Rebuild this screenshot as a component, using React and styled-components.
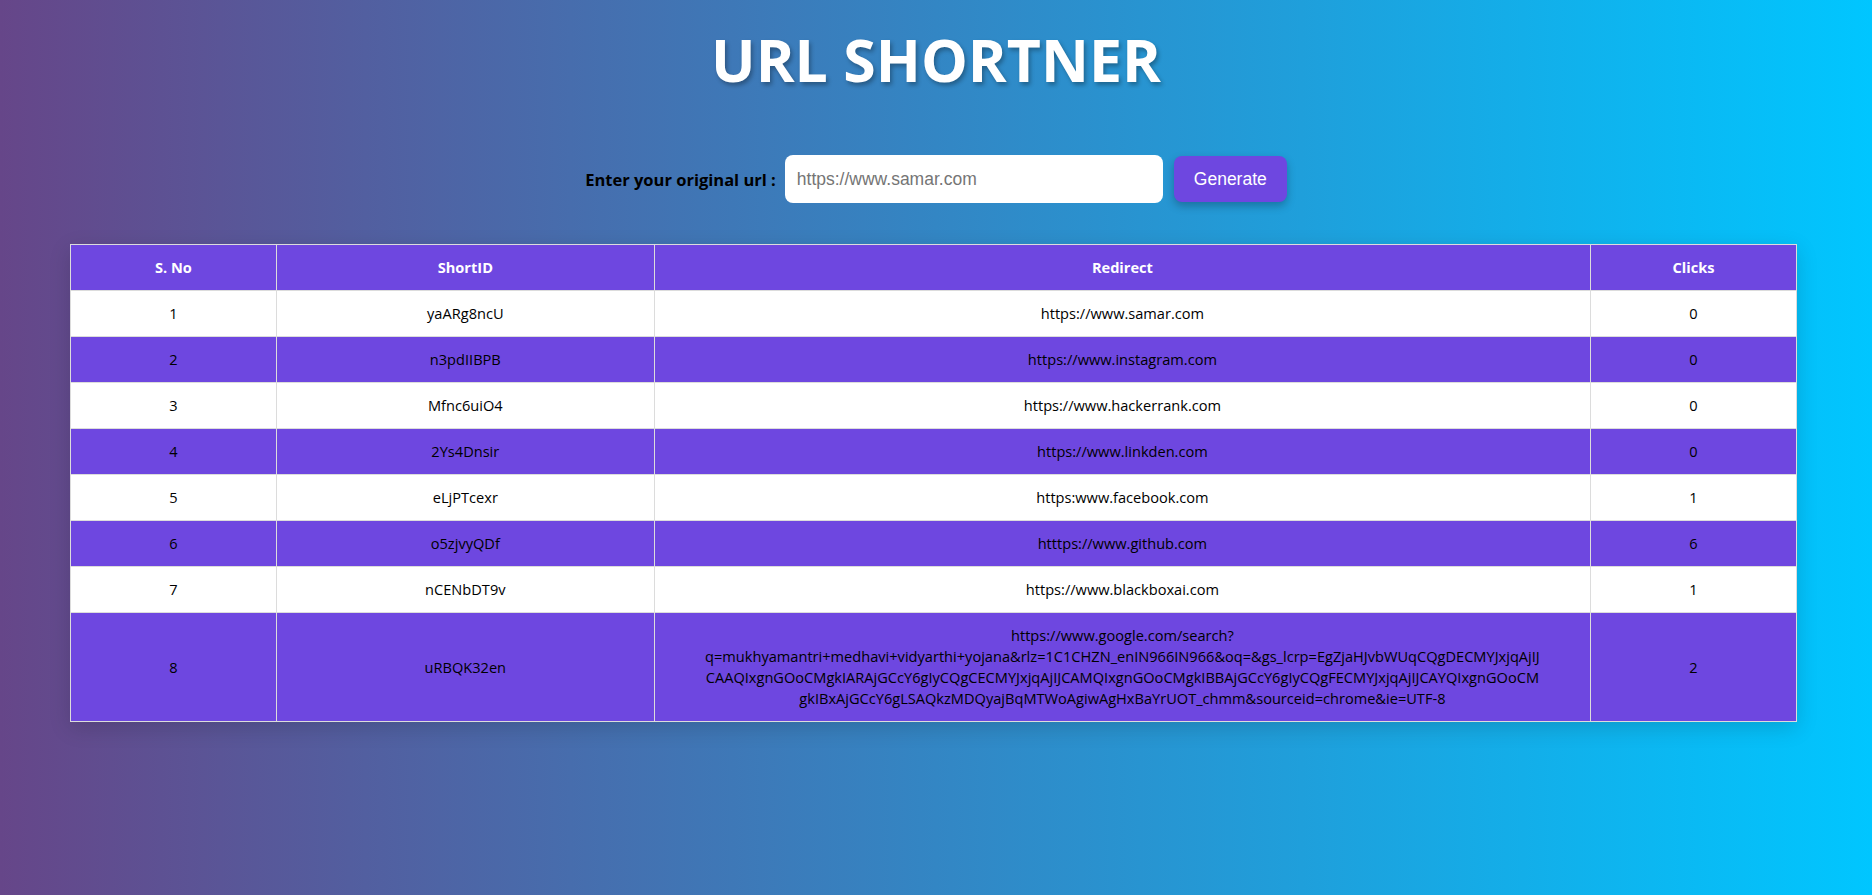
import styled, { createGlobalStyle } from "styled-components";

const GlobalStyle = createGlobalStyle`
  body{
    margin: 0;
    font-family: "Open Sans", "Noto Sans", sans-serif;
  }
`;

const columns = [
  { label: "S. No", width: "11.93%" },
  { label: "ShortID", width: "21.89%" },
  { label: "Redirect", width: "54.25%" },
  { label: "Clicks", width: "11.93%" },
];

const rows = [
  { id: "yaARg8ncU", redirect: ["https://www.samar.com"], clicks: 0 },
  { id: "n3pdIIBPB", redirect: ["https://www.instagram.com"], clicks: 0 },
  { id: "Mfnc6uiO4", redirect: ["https://www.hackerrank.com"], clicks: 0 },
  { id: "2Ys4Dnsir", redirect: ["https://www.linkden.com"], clicks: 0 },
  { id: "eLjPTcexr", redirect: ["https:www.facebook.com"], clicks: 1 },
  { id: "o5zjvyQDf", redirect: ["htttps://www.github.com"], clicks: 6 },
  { id: "nCENbDT9v", redirect: ["https://www.blackboxai.com"], clicks: 1 },
  {
    id: "uRBQK32en",
    // long search url, kept on the same lines as the live page wraps it
    redirect: [
      "https://www.google.com/search?",
      "q=mukhyamantri+medhavi+vidyarthi+yojana&rlz=1C1CHZN_enIN966IN966&oq=&gs_lcrp=EgZjaHJvbWUqCQgDECMYJxjqAjIJ",
      "CAAQIxgnGOoCMgkIARAjGCcY6gIyCQgCECMYJxjqAjIJCAMQIxgnGOoCMgkIBBAjGCcY6gIyCQgFECMYJxjqAjIJCAYQIxgnGOoCM",
      "gkIBxAjGCcY6gLSAQkzMDQyajBqMTWoAgiwAgHxBaYrUOT_chmm&sourceid=chrome&ie=UTF-8",
    ],
    clicks: 2,
  },
];

const App = () => {
  return (
    <Page>
      <GlobalStyle />
      <Title>URL SHORTNER</Title>
      <Form onSubmit={(e) => e.preventDefault()}>
        <label htmlFor="url">Enter your original url :</label>
        <input id="url" type="text" placeholder="https://www.samar.com" />
        <button type="submit">Generate</button>
      </Form>
      <TableWrap>
        <Table>
          <colgroup>
            {columns.map((c) => (
              <Col key={c.label} $w={c.width} />
            ))}
          </colgroup>
          <thead>
            <tr>
              {columns.map((c) => (
                <th key={c.label}>{c.label}</th>
              ))}
            </tr>
          </thead>
          <tbody>
            {rows.map((r, i) => (
              <Row key={r.id} $alt={i % 2 === 1}>
                <td>{i + 1}</td>
                <td>{r.id}</td>
                <td>
                  {r.redirect.map((line) => (
                    <Line key={line}>{line}</Line>
                  ))}
                </td>
                <td>{r.clicks}</td>
              </Row>
            ))}
          </tbody>
        </Table>
      </TableWrap>
    </Page>
  );
};

const Page = styled.div`
  min-height: 100vh;
  box-sizing: border-box;
  padding-top: 24px;
  background: linear-gradient(to right, #664689, #00c6ff);
`;

const Title = styled.h1`
  margin: 0;
  text-align: center;
  color: #fff;
  font-size: 59px;
  line-height: 70px;
  font-weight: 700;
  text-shadow: 2px 3px 4px rgba(0, 0, 0, 0.3);
`;

const Form = styled.form`
  display: flex;
  justify-content: center;
  align-items: center;
  gap: 9px;
  margin-top: 61px;
  label{
    font-size: 16.5px;
    font-weight: 700;
    color: #000;
  }
  input{
    width: 378px;
    height: 48px;
    box-sizing: border-box;
    border: none;
    outline: none;
    border-radius: 8px;
    padding: 0 12px;
    font-family: "Liberation Sans", Arial, sans-serif;
    font-size: 17.5px;
    background: #fff;
    &::placeholder{
      color: #757575;
    }
  }
  button{
    margin-left: 2px;
    height: 46px;
    width: 113px;
    border: none;
    border-radius: 8px;
    background: #6e47e0;
    color: #fff;
    font-family: "Liberation Sans", Arial, sans-serif;
    font-size: 17.5px;
    box-shadow: 0 4px 8px rgba(0, 0, 0, 0.25);
    cursor: pointer;
  }
`;

const TableWrap = styled.div`
  padding: 41px 75px 0 70px;
`;

const Table = styled.table`
  width: 100%;
  border-collapse: collapse;
  table-layout: fixed;
  font-size: 14.6px;
  line-height: 21px;
  box-shadow: 0 6px 20px rgba(0, 0, 0, 0.15);
  th, td{
    border: 1px solid #dcdcdc;
    padding: 12px;
    text-align: center;
    vertical-align: middle;
  }
  th{
    background: #6e47e0;
    color: #fff;
    font-weight: 700;
  }
`;

const Col = styled.col`
  width: ${(p) => p.$w};
`;

const Line = styled.span`
  display: block;
  white-space: nowrap;
`;

const Row = styled.tr`
  background: ${(p) => (p.$alt ? "#6e47e0" : "#fff")};
  color: #000;
`;

export default App;
